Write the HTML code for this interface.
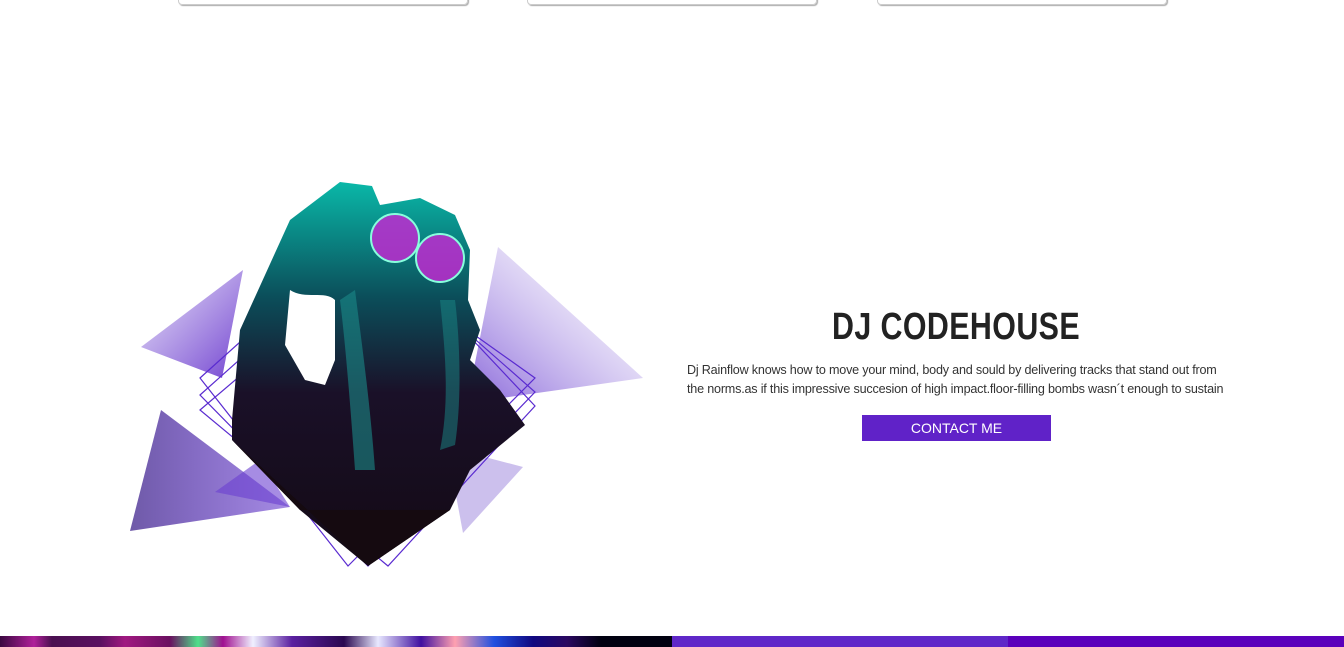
<!DOCTYPE html>
<html><head><meta charset="utf-8"><style>
html,body{margin:0;padding:0;background:#fff;width:1344px;height:647px;overflow:hidden;position:relative;font-family:"Liberation Sans",sans-serif}
.card{position:absolute;top:-20px;height:23px;width:288px;border:1px solid #ccc;border-radius:0 0 4px 4px;box-shadow:1px 1px 1px #aaa}
h1{position:absolute;left:700px;width:512px;top:306px;margin:0;text-align:center;font-size:38px;font-weight:bold;color:#222;letter-spacing:0.5px;transform:scaleX(.8);transform-origin:center}
p{position:absolute;left:687px;top:361px;width:545px;margin:0;font-size:12.6px;line-height:19px;color:#333;letter-spacing:-.2px}
.btn{position:absolute;left:862px;top:415px;width:189px;height:26px;background:#6022c8;color:#fff;font-size:14px;line-height:26px;text-align:center}
.strip{position:absolute;top:636px;height:11px}
</style></head><body>
<div class="card" style="left:178px"></div>
<div class="card" style="left:527px"></div>
<div class="card" style="left:877px"></div>
<svg width="1344" height="647" style="position:absolute;left:0;top:0">
<defs>
<linearGradient id="g1" x1="0" y1="0" x2="1" y2="1"><stop offset="0" stop-color="#6a3fd0" stop-opacity=".15"/><stop offset="1" stop-color="#5a22c8" stop-opacity=".85"/></linearGradient>
<linearGradient id="g2" x1="0" y1="0" x2="1" y2="0"><stop offset="0" stop-color="#6f5aa8"/><stop offset="1" stop-color="#6a3fd0" stop-opacity=".6"/></linearGradient>
<linearGradient id="g3" x1="0" y1="0" x2="0" y2="1"><stop offset="0" stop-color="#0ab8a8"/><stop offset=".3" stop-color="#0b4e5a"/><stop offset=".55" stop-color="#1a1028"/><stop offset="1" stop-color="#130a14"/></linearGradient>
<linearGradient id="g4" x1="1" y1="0" x2="0" y2="1"><stop offset="0" stop-color="#fff" stop-opacity=".3"/><stop offset="1" stop-color="#6a3fd0" stop-opacity=".8"/></linearGradient>
</defs>
<polygon points="141,347 243,270 222,378" fill="url(#g1)"/>
<polygon points="130,531 161,410 290,507" fill="url(#g2)"/>
<polygon points="215,492 260,460 290,507" fill="#6a3fd0" opacity=".6"/>
<polygon points="498,247 643,378 467,403" fill="url(#g4)"/>
<polygon points="523,467 463,533 447,447" fill="#8e74d8" opacity=".45"/>
<g fill="none" stroke="#5a2bd0" stroke-width="1.2">
<polygon points="200,378 348,245 535,378 348,566"/>
<polygon points="200,395 368,245 535,392 368,566"/>
<polygon points="200,410 388,250 535,406 388,566"/>
</g>
<path d="M232,420 L240,330 L290,220 L340,182 L372,186 L380,205 L420,198 L455,215 L470,250 L468,300 L480,330 L470,360 L500,390 L525,425 L470,470 L450,510 L368,566 L300,510 L232,440Z" fill="url(#g3)"/>
<path d="M232,440 L300,510 L450,510 L368,566Z" fill="#150a10"/>
<path d="M340,300 C345,340 350,400 355,470 L375,470 C370,400 360,330 355,290Z" fill="#1a8a88" opacity=".6"/>
<path d="M440,300 C445,350 450,400 440,450 L455,445 C462,400 460,340 455,300Z" fill="#1a8a88" opacity=".5"/>
<circle cx="395" cy="238" r="24" fill="#c02ad0" opacity=".85"/>
<circle cx="440" cy="258" r="24" fill="#c02ad0" opacity=".85"/>
<circle cx="395" cy="238" r="24" fill="none" stroke="#8fd" stroke-width="2"/>
<circle cx="440" cy="258" r="24" fill="none" stroke="#8fd" stroke-width="2"/>
<path d="M290,290 C305,300 325,290 335,300 L335,360 L325,385 L305,380 L285,345Z" fill="#fff"/>
</svg>
<h1>DJ CODEHOUSE</h1>
<p>Dj Rainflow knows how to move your mind, body and sould by delivering tracks that stand out from the norms.as if this impressive succesion of high impact.floor-filling bombs wasn´t enough to sustain</p>
<div class="btn">CONTACT ME</div>
<div class="strip" style="left:0;width:672px;background:linear-gradient(90deg,#3a0840 0px,#b0209a 34px,#4a1050 52px,#5a1060 100px,#a01880 125px,#6a1060 170px,#4ee08a 198px,#a01090 223px,#f0f0ff 253px,#5a20a0 292px,#2a0850 344px,#e8e8ff 378px,#4010a0 421px,#ffa0b0 455px,#2050e0 494px,#100880 533px,#2a0860 567px,#000010 601px,#000010 672px)"></div>
<div class="strip" style="left:672px;width:336px;background:#5f27c8"></div>
<div class="strip" style="left:1008px;width:336px;background:#5a00bb"></div>
</body></html>
